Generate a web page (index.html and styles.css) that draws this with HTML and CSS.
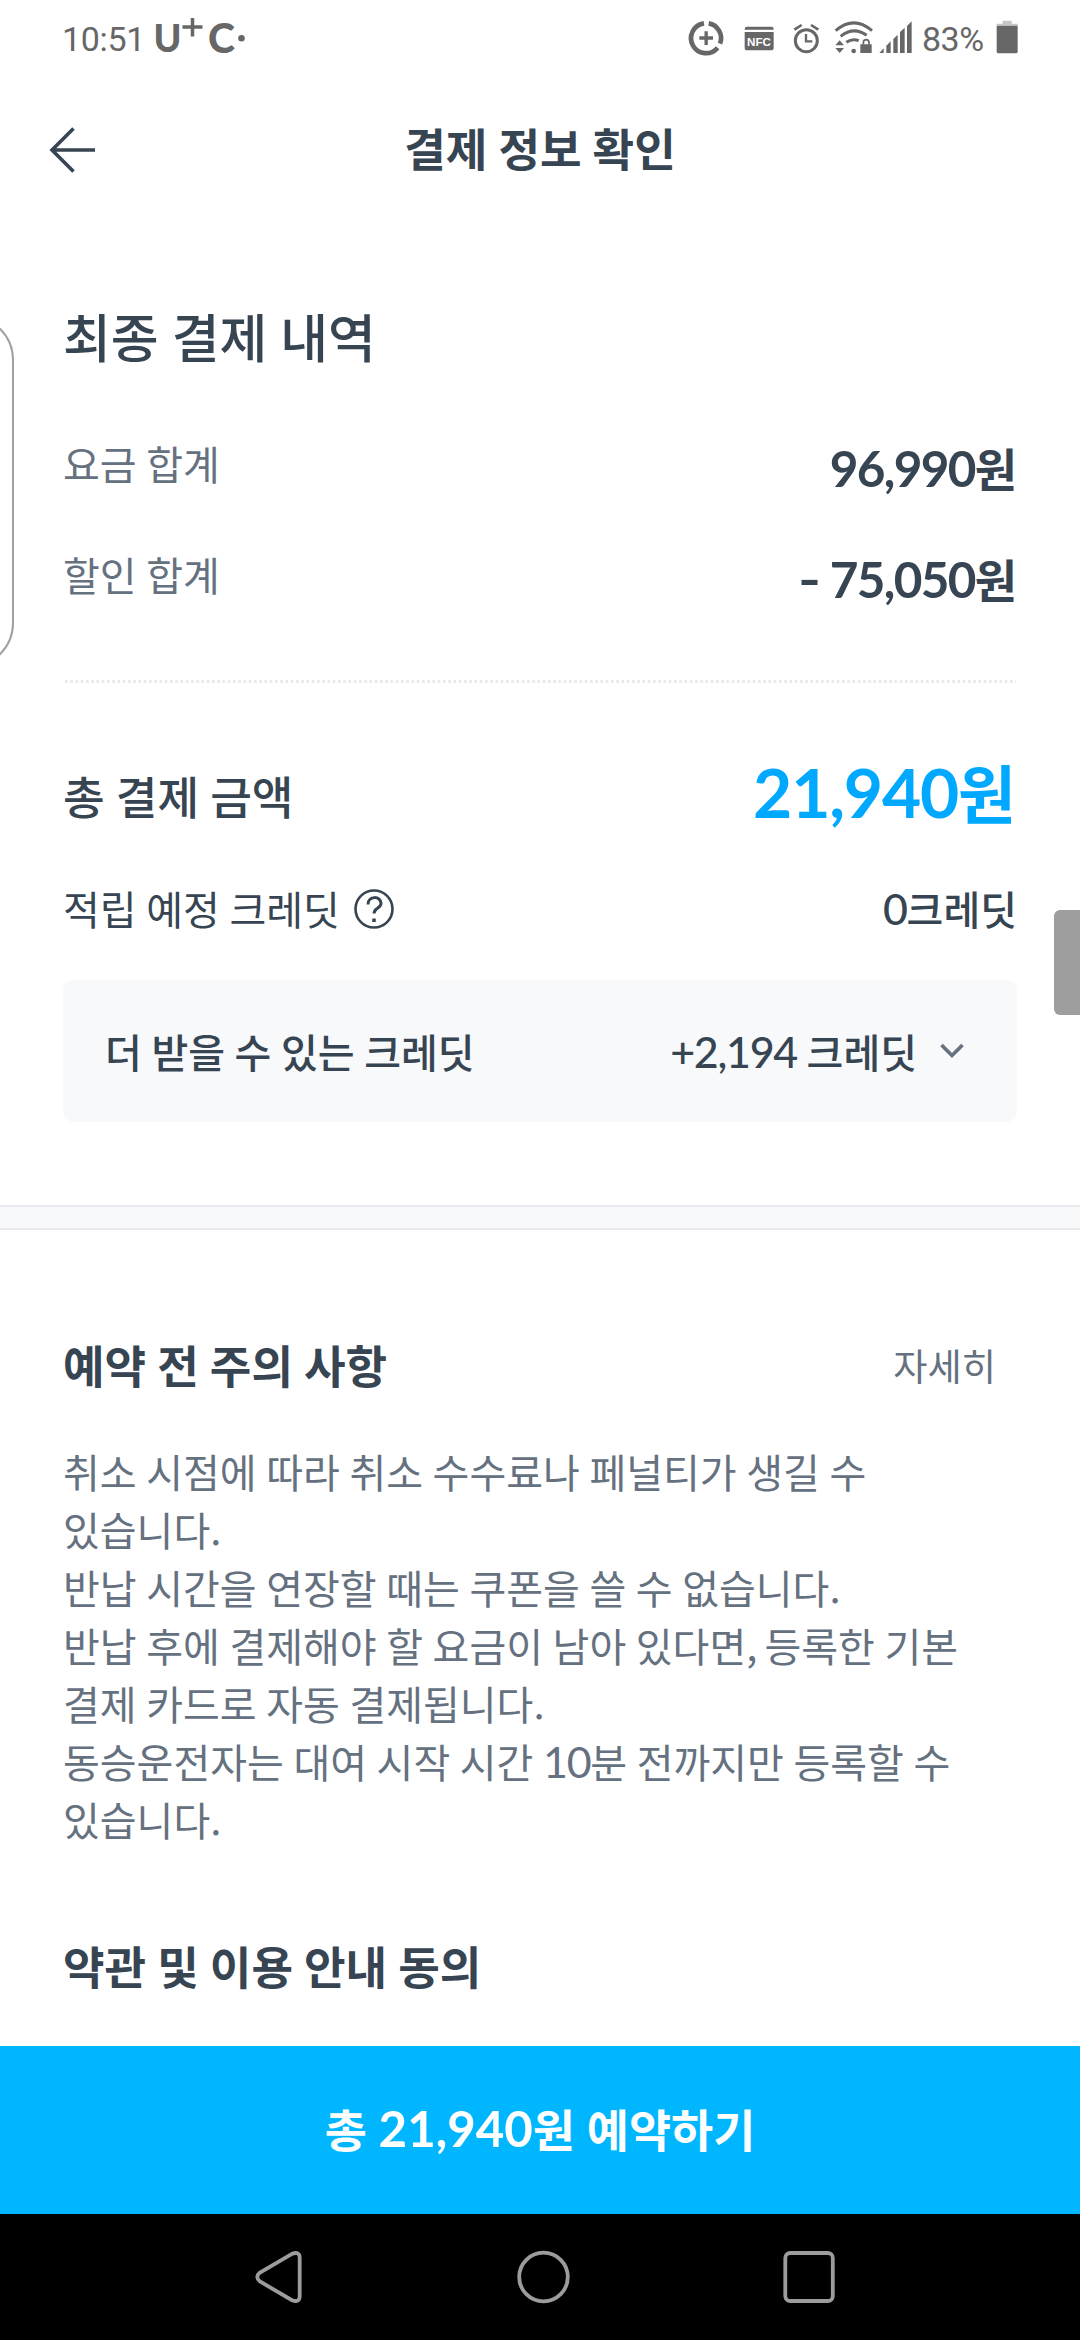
FILE: index.html
```html
<!DOCTYPE html>
<html lang="ko">
<head>
<meta charset="utf-8">
<title>결제 정보 확인</title>
<link rel="stylesheet" href="styles.css">
</head>
<body>
<div class="screen">
  <div class="status-bar">
    <span class="clock">10:51</span>
    <svg class="carrier" width="96" height="40" viewBox="153 17 96 40">
      <text x="153.5" y="52" font-size="37" textLength="28" lengthAdjust="spacingAndGlyphs">U</text>
      <path d="M182.500 27h20M192.500 18v18.500" stroke="#676767" stroke-width="3.500"/>
      <text x="208" y="53" font-size="41" textLength="27" lengthAdjust="spacingAndGlyphs">C</text>
      <circle cx="241.500" cy="38.300" r="3.300"/>
    </svg>
    <div class="status-icons">
      <svg width="36" height="36" viewBox="82 61 108 108">
        <g fill="none" stroke="#676767">
          <path d="M144 71A45 45 0 0 1 178 132M171 144A45 45 0 1 1 130 71" stroke-width="14"/>
          <path d="M116 115h41M136.500 95v41" stroke-width="10"/>
        </g>
      </svg>
      <svg class="nfc" width="30" height="36" viewBox="250 61 90 108">
        <path d="M252 90v-2q0-7 7-7h73q7 0 7 7v2zM252 97h87v47q0 8-8 8h-71q-8 0-8-8z"/>
        <text x="259" y="138" font-size="35" textLength="72" lengthAdjust="spacingAndGlyphs">NFC</text>
      </svg>
      <svg class="alarm" width="27" height="36" viewBox="396 61 81 108">
        <g fill="none" stroke="#676767">
          <circle cx="436" cy="123" r="33" stroke-width="9"/>
          <path d="M435 103v22h19" stroke-width="7"/>
          <path d="M400 90l22-14M472 90l-22-14" stroke-width="8"/>
        </g>
      </svg>
      <svg class="wifi" width="40" height="36" viewBox="521 61 120 108">
        <g fill="none" stroke="#676767" stroke-width="9">
          <path d="M526 93Q580 46 635 93M541 110Q580 79 619 107M558 128Q577 115 595 123"/>
          <path d="M609 135v-5q0-10 8.500-10t8.500 10v5" stroke-width="5"/>
        </g>
        <circle cx="580" cy="154" r="7"/>
        <path d="M538 122l13 15h-26zM538 160l13-15h-26zM600 134h34v26h-34z"/>
      </svg>
      <svg class="signal" width="34" height="36" viewBox="657 61 102 108">
        <path d="M658 160l13-14v14zM679 160v-22l13-13v35zM700 160v-42l13-13v55zM720 160v-63l14-13v76zM741 160v-81l14-14v95z"/>
      </svg>
      <span class="percent">83%</span>
      <svg class="battery" width="22" height="36" viewBox="1006 61 66 108">
        <path d="M1026 63h27v9h18v6h-63v-6h18z" fill="#c6c6c6"/>
        <path d="M1008 78h63v78q0 5-5 5h-53q-5 0-5-5z"/>
      </svg>
    </div>
  </div>

  <header class="app-bar">
    <svg class="back" width="48" height="48" viewBox="0 0 48 48" fill="none" stroke="#374553" stroke-width="3.600">
      <path d="M46 24H4M24.500 2.500L3 24l21.500 21.500"/>
    </svg>
    <h1>결제 정보 확인</h1>
  </header>

  <main>
    <section class="summary">
      <h2>최종 결제 내역</h2>
      <div class="row"><span class="label">요금 합계</span><strong><span class="num">96,990</span>원</strong></div>
      <div class="row"><span class="label">할인 합계</span><strong><span class="num"><span class="minus">-</span> 75,050</span>원</strong></div>
      <svg class="divider" width="951" height="3"><path d="M0 1.500H951" stroke="#e9e9ed" stroke-width="3" stroke-dasharray="2.625 2.625"/></svg>
      <div class="total"><span>총 결제 금액</span><strong><span class="num">21,940</span>원</strong></div>
      <div class="credit">
        <span>적립 예정 크레딧</span>
        <svg width="42" height="42" viewBox="0 0 42 42" fill="none" stroke="#374553">
          <circle cx="21" cy="21" r="18.500" stroke-width="2.600"/>
          <path d="M15 16.500c0-9 13-9 13-1 0 5-7 4-7 10" stroke-width="3"/>
          <path d="M21 30.500v3.500" stroke-width="3.500"/>
        </svg>
        <span class="credit-value"><span class="num">0</span>크레딧</span>
      </div>
      <div class="extra">
        <span>더 받을 수 있는 크레딧</span>
        <span class="extra-value"><span class="num">+2,194</span> 크레딧</span>
        <svg width="24" height="16" viewBox="0 0 24 16" fill="none" stroke="#65717f" stroke-width="3.600"><path d="M1.500 2L12 12.500 22.500 2"/></svg>
      </div>
    </section>

    <div class="band"></div>

    <section class="notice">
      <div class="notice-head"><h3>예약 전 주의 사항</h3><a>자세히</a></div>
      <p>취소 시점에 따라 취소 수수료나 페널티가 생길 수<br>있습니다.<br>반납 시간을 연장할 때는 쿠폰을 쓸 수 없습니다.<br>반납 후에 결제해야 할 요금이 남아 있다면<span class="comma">,</span> 등록한 기본<br>결제 카드로 자동 결제됩니다.<br>동승운전자는 대여 시작 시간 <span class="num">10</span>분 전까지만 등록할 수<br>있습니다.</p>
      <h3 class="terms">약관 및 이용 안내 동의</h3>
    </section>
  </main>

  <button class="reserve">총&nbsp;<span class="num">21,940</span>원 예약하기</button>

  <nav class="nav-bar">
    <svg width="1080" height="126" viewBox="0 0 1080 126" fill="none" stroke="#9c9c9c" stroke-width="3.800">
      <path d="M292 39.800L260 58.500Q254.500 63 260 67.500L292 86.200Q299.700 89 299.700 82V44Q299.700 37 292 39.800Z"/>
      <circle cx="543.500" cy="63" r="24.300"/>
      <rect x="785.300" y="39" width="47.500" height="48" rx="5"/>
    </svg>
  </nav>

  <div class="edge-panel"></div>
  <div class="scroll-handle"></div>
</div>
</body>
</html>
```
FILE: styles.css
```css
* { box-sizing: border-box; }
body { margin: 0; background: #fff; }
.screen {
  position: relative;
  display: flex;
  flex-direction: column;
  width: 1080px;
  height: 2340px;
  overflow: hidden;
  background: #fff;
  color: #374553;
  font-family: "Noto Sans CJK KR", sans-serif;
  font-size: 40px;
  word-spacing: -1.6px;
  white-space: nowrap;
}
h1, h2, h3, p { margin: 0; }
svg { display: block; flex: none; overflow: visible; }
.num { font-family: Lato, sans-serif; font-size: 1.075em; letter-spacing: -0.03em; line-height: 0; }
.comma { letter-spacing: -2.5px; }

.status-bar {
  display: flex;
  height: 75px;
  padding: 0 62px 0 62px;
  color: #676767;
  fill: #676767;
  font: 34px/40px Roboto, sans-serif;
}
.clock { width: 91px; padding-top: 19px; letter-spacing: -0.3px; }
.carrier { margin-top: 17px; }
.carrier text { font-family: Lato, sans-serif; font-weight: 900; }
.status-icons { display: flex; margin-left: auto; padding-top: 20px; }
.nfc { margin-left: 20px; }
.nfc text { fill: #fff; font-family: "Liberation Sans", sans-serif; font-weight: 700; }
.alarm { margin-left: 19px; }
.wifi { margin-left: 14px; }
.signal { margin-left: 5px; }
.percent { width: 62px; margin: -1px 12px 0 9px; letter-spacing: -0.5px; }

.app-bar {
  display: grid;
  grid-template-columns: 48px 1fr 48px;
  align-items: center;
  height: 150px;
  padding: 0 49px;
}
h1 { font-size: 45.2px; line-height: 60px; text-align: center; margin-top: -5px; }

.summary { display: flex; flex-direction: column; height: 980px; padding: 81px 63px 0; }
h2 { height: 60px; margin-bottom: 42px; font-size: 52px; font-weight: 500; line-height: 60px; }
.row { display: flex; justify-content: space-between; height: 111px; line-height: 111px; }
.row .label { color: #65717f; line-height: 110px; }
.row strong { padding-top: 4px; font-size: 46px; line-height: 111px; }
.row .num { letter-spacing: -0.034em; }
.minus { display: inline-block; margin-right: 6px; transform: scaleX(1.25); transform-origin: left; line-height: 1; }
.divider { margin: 50px 0 0 2px; }
.total { display: flex; justify-content: space-between; height: 114px; margin-top: 55px; font-size: 45.3px; font-weight: 500; line-height: 114px; }
.total strong { color: #00a9ff; font-size: 63px; font-weight: 700; padding-right: 1px; line-height: 106px; }
.total .num { letter-spacing: -0.018em; }
.credit { display: flex; align-items: center; height: 112px; line-height: 113px; }
.credit svg { margin: 2px 0 0 13px; }
.credit-value { margin-left: auto; font-weight: 500; }
.extra { display: flex; align-items: center; height: 142px; margin-top: 16px; padding: 0 53px 0 42px; border-radius: 10px; background: #f8f9fb; font-weight: 500; line-height: 60px; }
.extra-value { margin-left: auto; }
.extra svg { margin-left: 23px; }

.band { height: 25px; border: solid #e9e9ef; border-width: 2px 0; background: #f8f9fb; }

.notice { padding: 105px 63px 0; }
.notice-head { display: flex; align-items: center; justify-content: space-between; height: 60px; padding-right: 21px; line-height: 60px; }
h3 { font-size: 45.2px; line-height: 60px; }
.notice-head a { color: #65717f; font-size: 37.2px; }
.notice p { margin-top: 47px; color: #65717f; line-height: 58px; }
.terms { margin-top: 88px; }

.reserve {
  display: flex;
  align-items: center;
  justify-content: center;
  height: 168px;
  margin-top: auto;
  padding: 0 0 5px;
  border: 0;
  background: #00b7ff;
  color: #fff;
  font: 700 45.8px/60px "Noto Sans CJK KR", sans-serif;
  word-spacing: -1px;
}
.reserve .num { letter-spacing: 0; }
.nav-bar { height: 126px; background: #000; }

.edge-panel { position: absolute; left: -106px; top: 315px; width: 120px; height: 353px; border: 2px solid #a0a0a0; border-radius: 45px; }
.scroll-handle { position: absolute; right: 0; top: 910px; width: 26px; height: 105px; border-radius: 6px 0 0 6px; background: #9e9e9e; }
```
